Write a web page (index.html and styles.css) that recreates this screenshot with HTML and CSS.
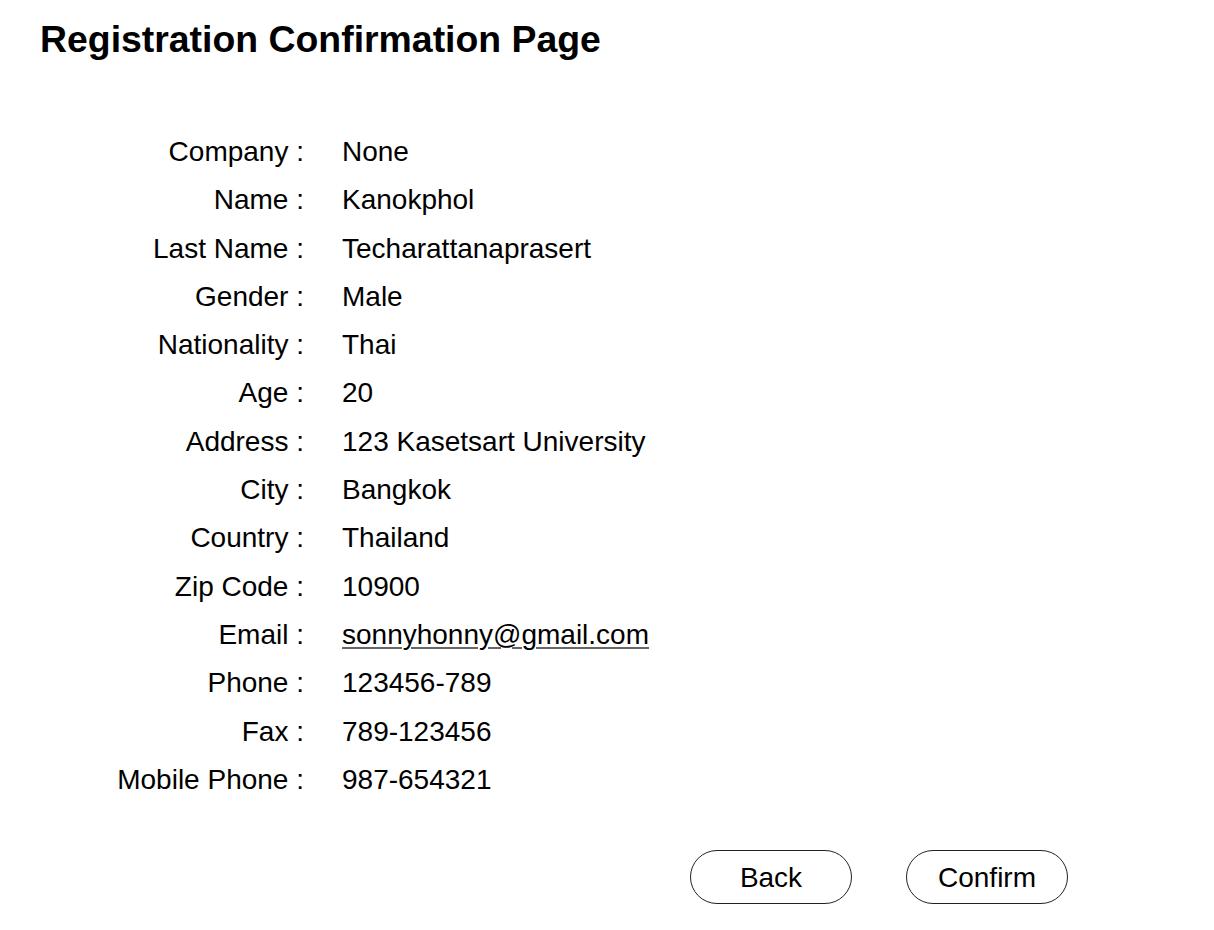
FILE: index.html
```html
<!DOCTYPE html>
<html lang="en">
<head>
<meta charset="utf-8">
<title>Registration Confirmation Page</title>
<link rel="stylesheet" href="styles.css">
</head>
<body>
<div class="page">
  <h1 class="title">Registration Confirmation Page</h1>
  <div class="details">
    <div class="label">Company :</div><div class="value">None</div>
    <div class="label">Name :</div><div class="value">Kanokphol</div>
    <div class="label">Last Name :</div><div class="value">Techarattanaprasert</div>
    <div class="label">Gender :</div><div class="value">Male</div>
    <div class="label">Nationality :</div><div class="value">Thai</div>
    <div class="label">Age :</div><div class="value">20</div>
    <div class="label">Address :</div><div class="value">123 Kasetsart University</div>
    <div class="label">City :</div><div class="value">Bangkok</div>
    <div class="label">Country :</div><div class="value">Thailand</div>
    <div class="label">Zip Code :</div><div class="value">10900</div>
    <div class="label">Email :</div><div class="value"><a class="email" href="#">sonnyhonny@gmail.com</a></div>
    <div class="label">Phone :</div><div class="value">123456-789</div>
    <div class="label">Fax :</div><div class="value">789-123456</div>
    <div class="label">Mobile Phone :</div><div class="value">987-654321</div>
  </div>
  <div class="actions">
    <button class="btn" type="button">Back</button>
    <button class="btn" type="button">Confirm</button>
  </div>
</div>
</body>
</html>
```

FILE: styles.css
```css
html, body {
  margin: 0;
  padding: 0;
  background: #ffffff;
}

body {
  font-family: "Liberation Sans", Arial, Helvetica, sans-serif;
  color: #000000;
}

.page {
  width: 1214px;
  padding-top: 17px;
}

.title {
  margin: 0 0 0 40px;
  font-size: 37.4px;
  line-height: 44px;
  font-weight: bold;
}

.details {
  margin-top: 67px;
  display: grid;
  grid-template-columns: 304px auto;
  column-gap: 38px;
  grid-auto-rows: 48.3px;
  font-size: 28px;
  line-height: 48.3px;
}

.label {
  text-align: right;
  white-space: nowrap;
}

.value {
  white-space: nowrap;
}

.email {
  color: #000000;
  text-decoration: underline;
  text-decoration-color: #666666;
  text-decoration-thickness: 2px;
  text-underline-offset: 3px;
}

.actions {
  margin-top: 46px;
  width: 1068px;
  display: flex;
  justify-content: flex-end;
  gap: 54px;
}

.btn {
  width: 162px;
  height: 54px;
  border: 1.5px solid #222222;
  border-radius: 27px;
  background: #ffffff;
  font-family: "Liberation Sans", Arial, Helvetica, sans-serif;
  font-size: 28px;
  line-height: 54px;
  color: #000000;
  padding: 0;
}
```
